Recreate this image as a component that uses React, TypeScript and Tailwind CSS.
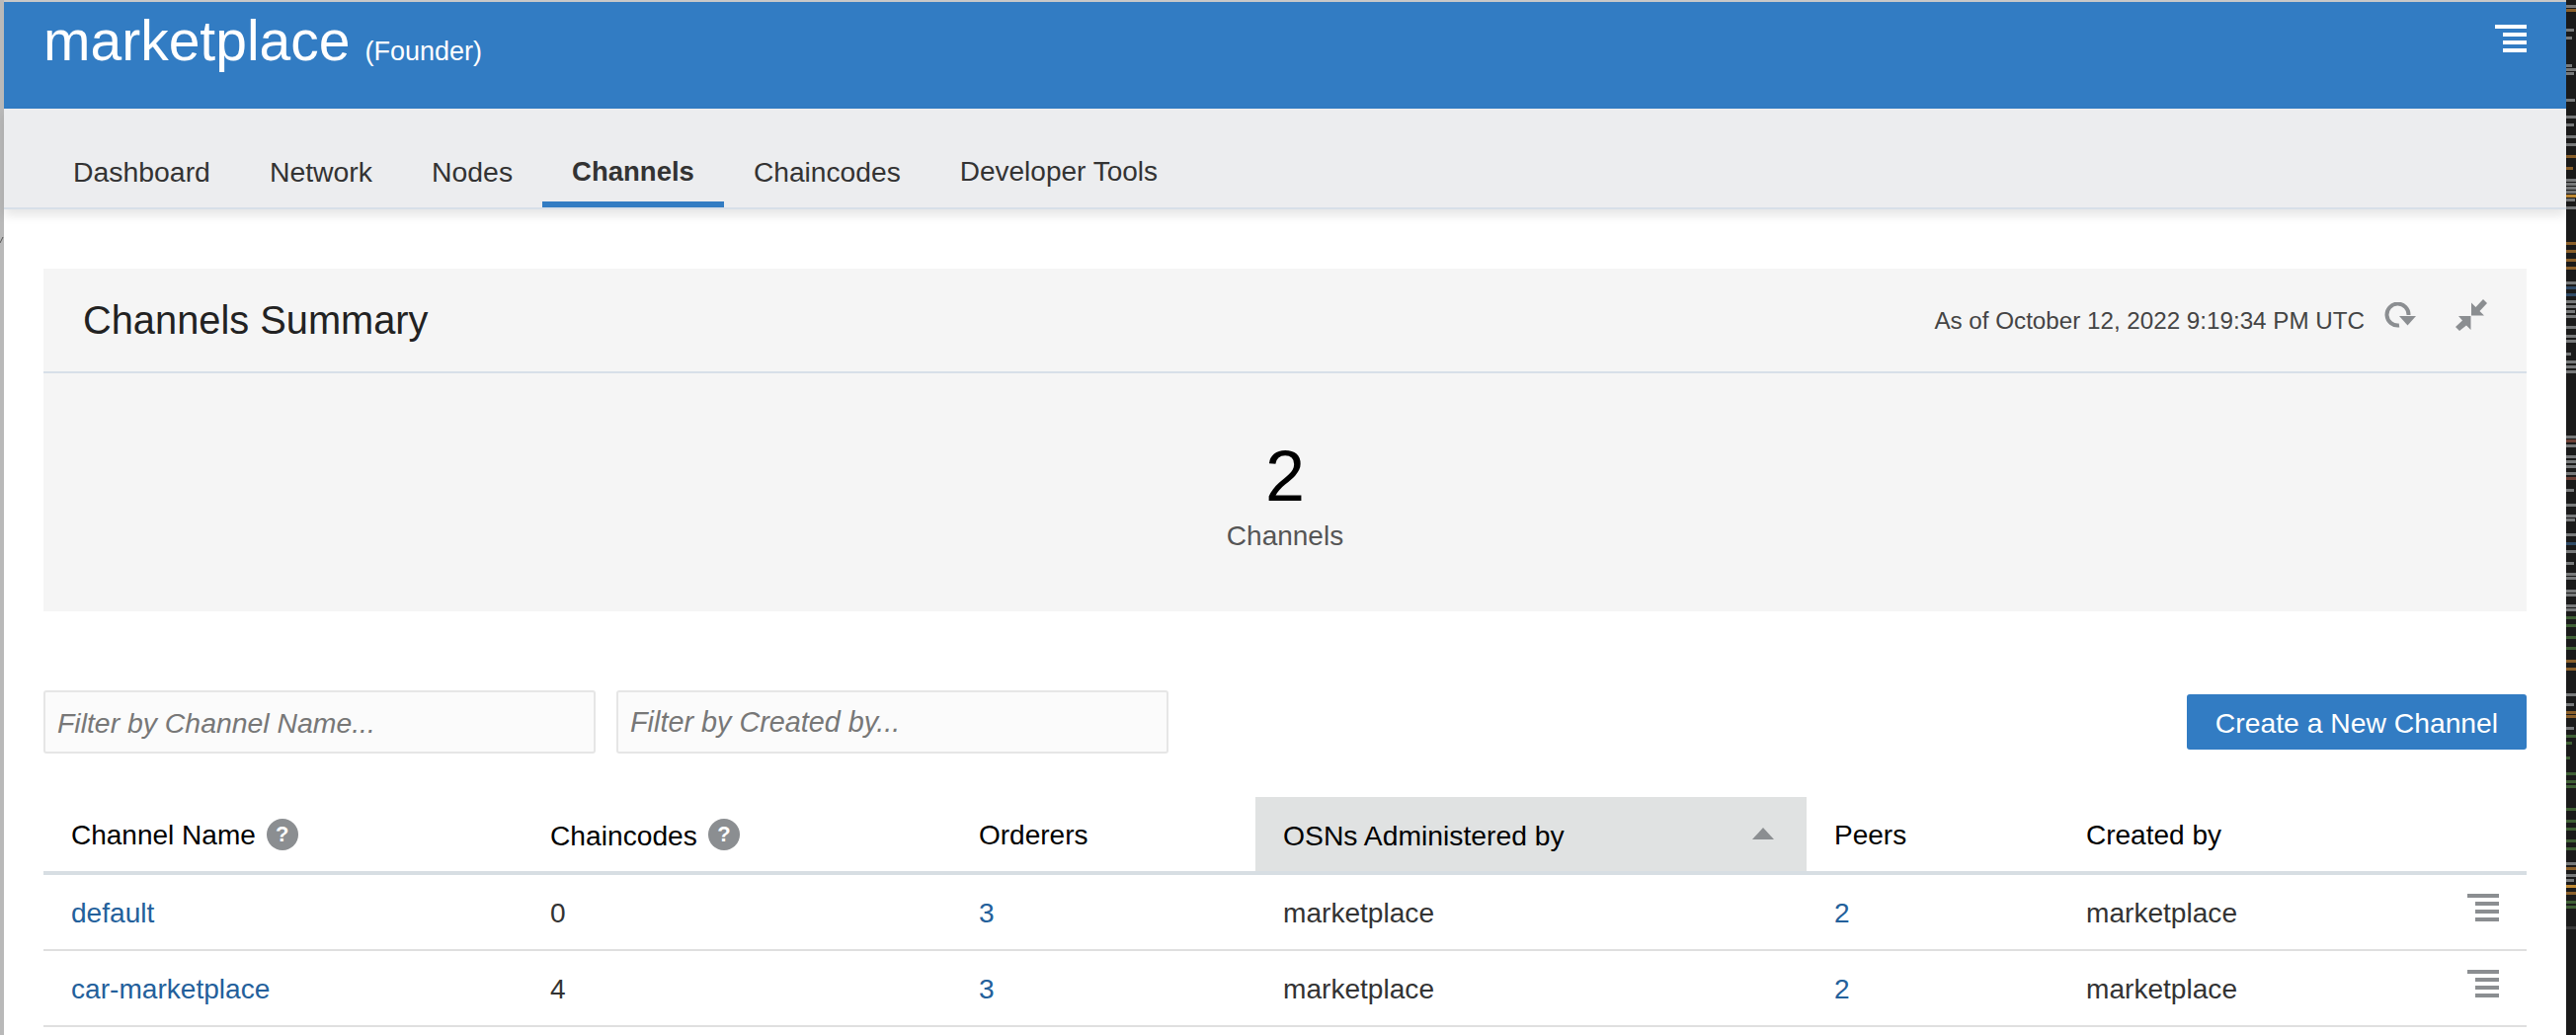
import React from "react";

const font = { fontFamily: '"Liberation Sans", Arial, sans-serif' };

function MenuIcon({ color, className }: { color: string; className?: string }) {
  return (
    <svg width="32" height="28" viewBox="0 0 32 28" className={className} fill={color}>
      <rect x="0" y="0" width="32" height="4" />
      <rect x="8" y="8" width="24" height="4" />
      <rect x="8" y="16" width="24" height="4" />
      <rect x="8" y="24" width="24" height="4" />
    </svg>
  );
}

function Help() {
  return (
    <span className="ml-[11px] inline-flex h-[32px] w-[32px] items-center justify-center rounded-full bg-[#8b8e91] text-[22px] font-bold text-white">
      ?
    </span>
  );
}

const tabs: [string, string][] = [
  ["Dashboard", "flex h-[60px] items-center px-[30px] pb-[12px] text-[28.4px] text-[#333]"],
  ["Network", "flex h-[60px] items-center px-[30px] pb-[12px] text-[28.4px] text-[#333]"],
  ["Nodes", "flex h-[60px] items-center px-[30px] pb-[12px] text-[28.4px] text-[#333]"],
  ["Channels", "flex h-[60px] items-center border-b-[6px] border-[#327cc3] px-[30px] pb-[6px] text-[27.5px] font-bold text-[#333]"],
  ["Chaincodes", "flex h-[60px] items-center px-[30px] pb-[12px] text-[28.2px] text-[#333]"],
  ["Developer Tools", "flex h-[60px] items-center px-[30px] pb-[12px] text-[28px] text-[#333]"],
];

const G = "#77797a";
const O = "#8a5f2a";
const B = "#2f4a66";
const N = "#3f5f35";
const smudges: [number, number, string][] = [
  [5, 10, G], [9, 10, O], [29, 8, G], [37, 6, G], [65, 6, G], [69, 10, G], [73, 8, G], [100, 9, G],
  [117, 10, G], [125, 8, G], [137, 10, G], [145, 10, G], [157, 10, O], [169, 7, O], [181, 10, G],
  [185, 10, G], [189, 10, G], [193, 10, G], [197, 10, "#c08a34"], [201, 9, G], [209, 10, G],
  [245, 10, O], [253, 10, O], [262, 10, O], [270, 10, O], [285, 10, G], [290, 10, B], [297, 10, B],
  [304, 10, G], [309, 10, G], [314, 9, G], [319, 10, G], [330, 10, G], [339, 10, G], [344, 10, G],
  [357, 5, G], [365, 10, G], [370, 10, G], [375, 10, G], [441, 10, G], [445, 10, "#6b3f35"], [450, 10, G],
  [461, 10, G], [466, 10, G], [471, 10, G], [478, 10, G], [483, 10, "#6b3f35"], [495, 8, G], [510, 10, G],
  [521, 10, G], [525, 9, G], [540, 10, G], [549, 10, B], [557, 10, G], [569, 8, G], [580, 10, G], [584, 10, G],
  [597, 10, G], [601, 10, G], [612, 10, G], [616, 10, G], [624, 10, N], [632, 10, N], [644, 10, N], [655, 10, N],
  [668, 10, O], [676, 10, O], [702, 10, G], [712, 8, G], [720, 10, O], [724, 10, O], [736, 8, G], [744, 10, N],
  [751, 6, N], [766, 4, N], [782, 10, N], [790, 10, N], [795, 10, N], [818, 10, N], [830, 10, N], [838, 10, N],
  [850, 10, N], [858, 10, N], [873, 10, G], [878, 10, O], [885, 10, G], [890, 8, G], [896, 10, "#c08a34"],
  [903, 10, O], [912, 10, N], [917, 10, N], [938, 10, "#3a3a3a"],
];

function CodeStrip() {
  return (
    <svg width="10" height="1048" viewBox="0 0 10 1048" className="block bg-[#1a1a1a]">
      {smudges.map(([y, w, c]) => (
        <rect key={y} x="0" y={y} width={w} height="3" fill={c} />
      ))}
    </svg>
  );
}

function Row({ name, code }: { name: string; code: string }) {
  return (
    <div className="flex h-[77px] items-center border-b-2 border-[#dfdfdf] text-[28.1px] text-[#333]">
      <div className="w-[485px] pl-[28px] pt-[3px] text-[#23609b]">{name}</div>
      <div className="w-[434px] pl-[28px] pt-[3px]">{code}</div>
      <div className="w-[308px] pl-[28px] pt-[3px] text-[#23609b]">3</div>
      <div className="w-[558px] pl-[28px] pt-[3px]">marketplace</div>
      <div className="w-[283px] pl-[28px] pt-[3px] text-[#23609b]">2</div>
      <div className="flex-1 pt-[3px]">marketplace</div>
      <MenuIcon color="#8b8e91" className="mr-[28px] mb-[10px]" />
    </div>
  );
}

export default function App() {
  return (
    <div style={font} className="flex h-[1048px] w-[2608px] overflow-hidden bg-white">
      <svg width="4" height="1048" viewBox="0 0 4 1048" className="block bg-[#b9b9b9]">
        <path d="M0 246 L3 240" stroke="#555" strokeWidth="1" />
      </svg>
      <div className="flex w-[2594px] flex-col">
        <div className="h-[2px] bg-[#c8c8c8]" />
        <header className="flex h-[108px] justify-between bg-[#327cc3] pl-[40px] pr-[40px] text-white">
          <div className="flex items-baseline pt-[7px]">
            <span className="text-[57px] leading-[64px]">marketplace</span>
            <span className="ml-[15px] text-[27px]">(Founder)</span>
          </div>
          <MenuIcon color="#ffffff" className="mt-[23px]" />
        </header>
        <nav className="relative flex h-[102px] items-end border-b-2 border-[#d7dfe8] bg-[#ecedef] pl-[40px] shadow-[0_6px_10px_rgba(0,0,0,0.1)]">
          {tabs.map(([t, cls]) => (
            <div key={t} className={cls}>
              {t}
            </div>
          ))}
        </nav>
        <main className="flex-1 pl-[40px] pr-[40px] pt-[60px]">
          <section className="h-[347px] bg-[#f5f5f5]">
            <div className="flex h-[106px] items-center justify-between border-b-2 border-[#d7dfe8] pl-[40px] pr-[40px]">
              <h1 className="pt-[2px] text-[39.8px] text-[#222]">Channels Summary</h1>
              <div className="flex items-center">
                <span className="pt-[2px] text-[24.2px] text-[#444]">As of October 12, 2022 9:19:34 PM UTC</span>
                <svg width="32" height="26" viewBox="0 0 32 26" className="ml-[20px] mb-[10px]" fill="none">
                  <path d="M15 23.5 A11 11 0 1 1 24.5 13" stroke="#8b8e91" strokeWidth="4" />
                  <path d="M15 14 H32 L23.5 23.5 Z" fill="#8b8e91" />
                </svg>
                <svg width="32" height="32" viewBox="0 0 32 32" className="ml-[40px] mb-[10px]" fill="#8b8e91">
                  <path d="M16 16.5 V3.5 L20.5 8 L28 0 L32 4 L24.5 12 L29 16.5 Z" />
                  <path d="M15.5 17 V31 L11 26.5 L4 32 L0 28 L7 21.5 L3 17 Z" />
                </svg>
              </div>
            </div>
            <div className="flex flex-col items-center pt-[64px]">
              <div className="text-[72px] leading-[80px] text-black">2</div>
              <div className="mt-[4px] text-[28px] leading-[34px] text-[#555]">Channels</div>
            </div>
          </section>
          <div className="mt-[80px] flex items-center">
            <div className="flex h-[64px] w-[559px] items-center rounded-[3px] border-2 border-[#e6e6e6] bg-[#fbfbfb] pl-[12px] pt-[2px] text-[28.4px] italic text-[#777]">
              Filter by Channel Name...
            </div>
            <div className="ml-[21px] flex h-[64px] w-[559px] items-center rounded-[3px] border-2 border-[#e6e6e6] bg-[#fbfbfb] pl-[12px] pt-[2px] text-[28.8px] italic text-[#777]">
              Filter by Created by...
            </div>
            <button className="ml-auto flex h-[56px] w-[344px] items-center justify-center rounded-[3px] bg-[#327cc3] pt-[2px] text-[28.3px] text-white">
              Create a New Channel
            </button>
          </div>
          <div className="mt-[44px] flex h-[79px] border-b-4 border-[#d7dee3] text-[28px] text-black">
            <div className="flex w-[485px] items-center pl-[28px]">
              <span className="pt-[3px]">Channel Name</span>
              <Help />
            </div>
            <div className="flex w-[434px] items-center pl-[28px]">
              <span className="pt-[3px] text-[28.2px]">Chaincodes</span>
              <Help />
            </div>
            <div className="flex w-[308px] items-center pl-[28px] pt-[3px]">Orderers</div>
            <div className="relative flex w-[558px] items-center bg-[#e0e2e2] pl-[28px] pt-[3px] text-[28.3px]">
              OSNs Administered by
              <svg width="22" height="12" viewBox="0 0 22 12" className="absolute right-[33px] top-[31px]" fill="#8b8e91">
                <path d="M11 0 L22 12 H0 Z" />
              </svg>
            </div>
            <div className="flex w-[283px] items-center pl-[28px] pt-[3px]">Peers</div>
            <div className="flex flex-1 items-center pt-[3px]">Created by</div>
          </div>
          <Row name="default" code="0" />
          <Row name="car-marketplace" code="4" />
        </main>
      </div>
      <CodeStrip />
    </div>
  );
}
